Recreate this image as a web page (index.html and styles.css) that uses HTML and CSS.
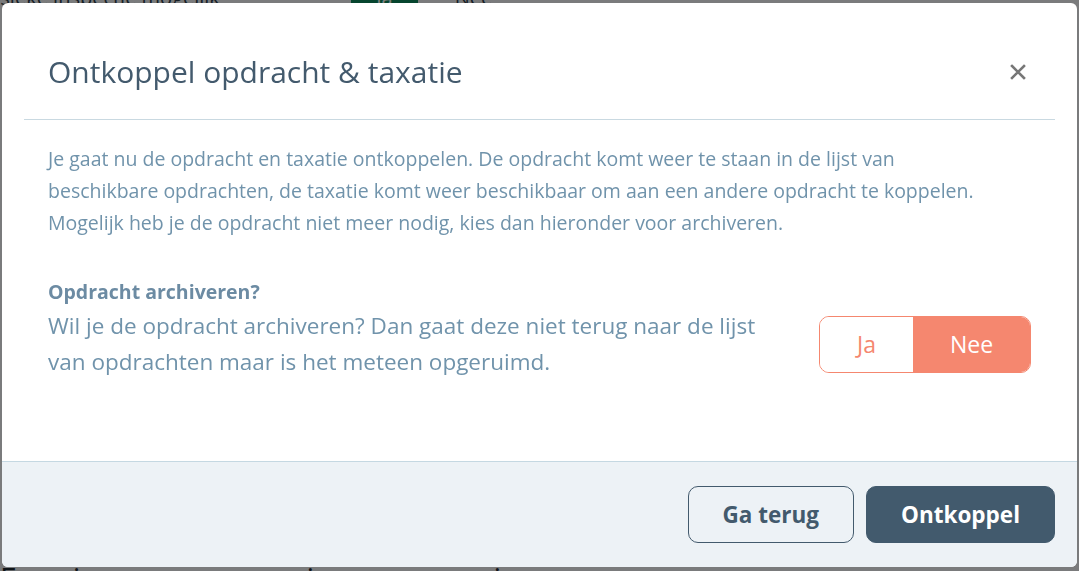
FILE: index.html
```html
<!DOCTYPE html>
<html lang="nl">
<head>
    <meta charset="UTF-8">
    <meta name="viewport" content="width=device-width, initial-scale=1.0">
    <title>Ontkoppel opdracht &amp; taxatie</title>
    <link rel="stylesheet" href="styles.css">
</head>
<body>
    <div class="page">
        <div class="page-row">
            <span class="page-label">Fysieke inspectie mogelijk</span>
            <span class="page-choice active">Ja</span>
            <span class="page-choice">Nee</span>
        </div>
        <h2 class="page-heading">Ervaring opname woning en omgeving</h2>
    </div>

    <div class="overlay">
        <div class="modal">
            <div class="modal-header">
                <h1>Ontkoppel opdracht &amp; taxatie</h1>
                <button class="close-button" aria-label="Sluiten">
                    <svg width="16" height="16" viewBox="0 0 16 16">
                        <path d="M2 2 L14 14 M14 2 L2 14" stroke="#777" stroke-width="2.6" stroke-linecap="square"/>
                    </svg>
                </button>
            </div>
            <div class="modal-body">
                <p class="intro">Je gaat nu de opdracht en taxatie ontkoppelen. De opdracht komt weer te staan in de lijst van beschikbare opdrachten, de taxatie komt weer beschikbaar om aan een andere opdracht te koppelen. Mogelijk heb je de opdracht niet meer nodig, kies dan hieronder voor archiveren.</p>
                <div class="question">
                    <div class="question-label">Opdracht archiveren?</div>
                    <div class="question-row">
                        <p class="question-text">Wil je de opdracht archiveren? Dan gaat deze niet terug naar de lijst van opdrachten maar is het meteen opgeruimd.</p>
                        <div class="toggle">
                            <button class="toggle-option">Ja</button>
                            <button class="toggle-option selected">Nee</button>
                        </div>
                    </div>
                </div>
            </div>
            <div class="modal-footer">
                <button class="btn btn-outline">Ga terug</button>
                <button class="btn btn-primary">Ontkoppel</button>
            </div>
        </div>
    </div>
</body>
</html>
```

FILE: styles.css
```css
/* Reset */
* {
    margin: 0;
    padding: 0;
    box-sizing: border-box;
}

body {
    font-family: 'Open Sans', 'Noto Sans', sans-serif;
    background: #f4f6f8;
    height: 100vh;
    overflow: hidden;
}

/* Page behind the dialog */
.page {
    height: 100vh;
    display: flex;
    flex-direction: column;
    justify-content: space-between;
    overflow: hidden;
}

.page-row {
    display: flex;
    align-items: center;
    margin-top: -16px;
    height: 26px;
    font-size: 20px;
    color: #2d3e4c;
}

.page-label {
    width: 351px;
    margin-left: -20px;
    margin-right: 20px;
}

.page-choice {
    width: 67px;
    height: 26px;
    text-align: center;
    margin-right: 22px;
}

.page-choice.active {
    background: #0d8a5c;
    color: #fff;
}

.page-heading {
    font-size: 30px;
    font-weight: 400;
    line-height: 30px;
    color: #1e2a33;
    margin-bottom: -22px;
}

/* Dialog */
.overlay {
    position: fixed;
    inset: 0;
    background: rgba(0, 0, 0, 0.5);
    padding: 3px 2px 4px 2px;
    display: flex;
}

.modal {
    flex: 1;
    display: flex;
    flex-direction: column;
    background: #fff;
    border-radius: 6px;
    overflow: hidden;
}

.modal-header {
    display: flex;
    align-items: center;
    justify-content: space-between;
    margin: 0 22px;
    padding: 49px 29px 27px 24px;
    border-bottom: 1px solid #c9d9e1;
}

.modal-header h1 {
    font-size: 30px;
    line-height: 40px;
    font-weight: 400;
    color: #435a6d;
}

.close-button {
    border: none;
    background: none;
    width: 16px;
    height: 16px;
    display: flex;
    cursor: pointer;
}

.modal-body {
    flex: 1;
    padding: 23px 46px 0 46px;
}

.intro {
    max-width: 955px;
    font-size: 19.5px;
    line-height: 32px;
    color: #7093ab;
}

.question {
    margin-top: 39px;
}

.question-label {
    font-size: 19.5px;
    line-height: 28px;
    font-weight: 700;
    color: #6c8ba3;
}

.question-row {
    display: flex;
    align-items: center;
    justify-content: space-between;
    margin-top: 2px;
}

.question-text {
    max-width: 740px;
    font-size: 22.5px;
    line-height: 36px;
    color: #7093ab;
}

.toggle {
    display: flex;
    width: 212px;
    height: 57px;
    border: 1px solid #f5876f;
    border-radius: 10px;
    overflow: hidden;
    flex-shrink: 0;
}

.toggle-option {
    font-family: inherit;
    font-size: 23px;
    border: none;
    background: #fff;
    color: #f5876f;
    cursor: pointer;
    width: 93px;
}

.toggle-option.selected {
    flex: 1;
    background: #f5876f;
    color: #fff;
}

.modal-footer {
    display: flex;
    justify-content: flex-end;
    gap: 12px;
    padding: 24px 22px;
    background: #edf2f6;
    border-top: 1px solid #c5d8e2;
}

.btn {
    font-family: inherit;
    font-size: 22.5px;
    font-weight: 700;
    height: 57px;
    padding: 0 34px;
    border-radius: 10px;
    cursor: pointer;
}

.btn-outline {
    background: transparent;
    border: 1px solid #435a6d;
    color: #435a6d;
}

.btn-primary {
    background: #425a6d;
    border: 1px solid #425a6d;
    color: #fff;
}
```
